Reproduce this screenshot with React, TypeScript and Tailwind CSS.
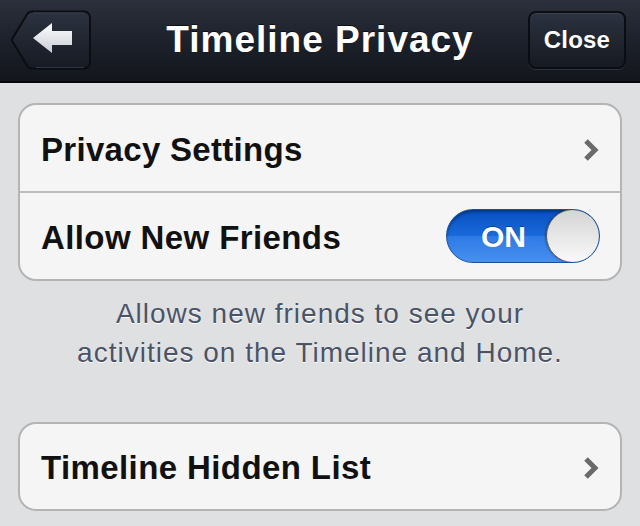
import React from 'react';

const font = { fontFamily: '"Liberation Sans", Arial, Helvetica, sans-serif' };

const Chevron: React.FC = () => (
    <svg width="18" height="26" viewBox="0 0 18 26" className="shrink-0 mt-[3px]">
        <path d="M4 4 L13 13 L4 22" fill="none" stroke="#6a6a6a" strokeWidth="5" strokeLinejoin="miter" />
    </svg>
);

const BackButton: React.FC = () => (
    <button className="relative w-[82px] h-[60px] ml-px">
        <svg width="82" height="60" viewBox="0 0 82 60" className="absolute inset-0">
            <defs>
                <linearGradient id="bb" x1="0" y1="0" x2="0" y2="1">
                    <stop offset="0" stopColor="#2c3240" />
                    <stop offset="1" stopColor="#161a22" />
                </linearGradient>
                <linearGradient id="ar" x1="0" y1="0" x2="0" y2="1">
                    <stop offset="0" stopColor="#ffffff" />
                    <stop offset="1" stopColor="#c9ccd6" />
                </linearGradient>
            </defs>
            <path
                d="M22 1.5 H74 a6 6 0 0 1 6 6 V52.5 a6 6 0 0 1 -6 6 H22 a6 6 0 0 1 -4.3 -1.8 L3 32.5 a3.5 3.5 0 0 1 0 -5 L17.7 3.3 A6 6 0 0 1 22 1.5 Z"
                fill="url(#bb)"
                stroke="#0b0d12"
                strokeWidth="2"
            />
            <path d="M23 3 H74" stroke="#3a4150" strokeWidth="1" />
            <path d="M26 57.5 H74" stroke="#2f3542" strokeWidth="1" />
            <path d="M23 28 L42 13 V21 H62 V35 H42 V43 Z" fill="url(#ar)" />
        </svg>
    </button>
);

const Toggle: React.FC = () => (
    <div className="relative w-[154px] h-[54px] rounded-full overflow-hidden border border-[#1b4f9a] bg-gradient-to-b from-[#0650c0] via-[#1a6adc] to-[#5aa0f2] shadow-[inset_0_2px_3px_rgba(0,0,0,0.35)]">
        <div className="absolute left-0 right-0 bottom-0 h-[26px] bg-[#3b86ec] opacity-60" />
        <span className="absolute left-[34px] top-0 h-full flex items-center text-white text-[30px] font-bold [text-shadow:0_-1px_0_rgba(0,0,0,0.35)]" style={font}>ON</span>
        <div className="absolute right-[-1px] top-[-1px] w-[54px] h-[54px] rounded-full border border-[#5b5b5b] bg-gradient-to-b from-[#d4d4d4] to-[#fafafa] shadow-[-1px_0_2px_rgba(0,0,0,0.3)]" />
    </div>
);

export default function App() {
    return (
        <div className="w-[640px] h-[526px] overflow-hidden flex flex-col bg-[#dfe0e2]" style={font}>
            <header className="h-[83px] shrink-0 flex items-center px-[9px] pb-[2px] bg-gradient-to-b from-[#2b303c] via-[#1d212b] to-[#13161c] border-b-[2px] border-[#050608]">
                <div className="w-[115px] flex">
                    <BackButton />
                </div>
                <h1 className="flex-1 text-center text-white text-[37px] font-bold tracking-[1px] [text-shadow:0_-1px_0_rgba(0,0,0,0.6)]">Timeline Privacy</h1>
                <div className="w-[115px] flex justify-end">
                    <button className="w-[98px] h-[58px] mr-[5px] rounded-[8px] border-2 border-[#0b0d12] bg-gradient-to-b from-[#2c3240] to-[#161a22] shadow-[inset_0_1px_0_#3a4150,0_1px_0_#2f3542] text-white text-[24px] font-bold tracking-[0.2px]">
                        Close
                    </button>
                </div>
            </header>

            <div className="flex flex-col px-[18px] pt-[20px]">
                <div className="rounded-[18px] border-2 border-[#b3b4b6] bg-[#f5f5f5] overflow-hidden">
                    <div className="h-[88px] flex items-center justify-between pl-[21px] pr-[20px] border-b-2 border-[#bcbdbf]">
                        <span className="pt-[3px] text-[33px] font-bold tracking-[0.3px] text-[#111]">Privacy Settings</span>
                        <Chevron />
                    </div>
                    <div className="h-[86px] flex items-center justify-between pl-[21px] pr-[20px]">
                        <span className="pt-[3px] text-[33px] font-bold tracking-[0.4px] text-[#111]">Allow New Friends</span>
                        <Toggle />
                    </div>
                </div>

                <p className="mt-[13px] text-center text-[28px] leading-[39px] tracking-[1px] text-[#4b5366] [text-shadow:0_1px_0_#ffffff]">
                    Allows new friends to see your
                    <br />
                    activities on the Timeline and Home.
                </p>

                <div className="mt-[50px] h-[89px] rounded-[18px] border-2 border-[#b3b4b6] bg-[#f5f5f5] flex items-center justify-between pl-[21px] pr-[20px]">
                    <span className="pt-[3px] text-[33px] font-bold tracking-[0.4px] text-[#111]">Timeline Hidden List</span>
                    <Chevron />
                </div>
            </div>
        </div>
    );
}
